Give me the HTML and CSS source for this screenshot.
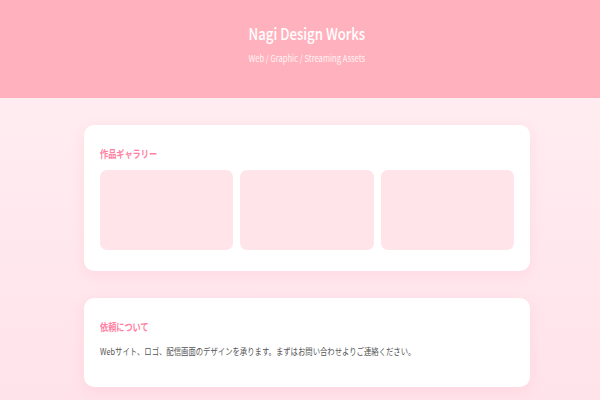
FILE: index.html
```html
<!DOCTYPE html>
<html lang="ja">
<head>
<meta charset="utf-8">
<link rel="stylesheet" href="styles.css">
</head>
<body>
<header class="hero">
  <h1 class="hero-title"><span class="narrow">Nagi Design Works</span></h1>
  <p class="hero-sub"><span class="narrow">Web / Graphic / Streaming Assets</span></p>
</header>
<main class="main">
  <section class="card">
    <h2 class="card-title"><span class="narrow left">作品ギャラリー</span></h2>
    <div class="gallery">
      <div class="tile"></div>
      <div class="tile"></div>
      <div class="tile"></div>
    </div>
  </section>
  <section class="card card-about">
    <h2 class="card-title"><span class="narrow left">依頼について</span></h2>
    <p class="card-text"><span class="narrow left">Webサイト、ロゴ、配信画面のデザインを承ります。まずはお問い合わせよりご連絡ください。</span></p>
  </section>
</main>
</body>
</html>
```
FILE: styles.css
```css
* { box-sizing: border-box; }
html, body { margin: 0; padding: 0; }
body {
  font-family: "Noto Sans CJK JP", "Noto Sans", sans-serif;
  background: linear-gradient(#fff0f3, #ffe3ea);
  min-height: 400px;
  overflow: hidden;
}
.narrow {
  display: inline-block;
  white-space: nowrap;
  transform: scaleX(0.8);
  transform-origin: center;
}
.narrow.left { transform-origin: left center; }
.hero {
  background: #ffb2bd;
  height: 98px;
  padding: 21px 0 0 14px;
  text-align: center;
  color: #fff;
}
.hero-title {
  margin: 0;
  font-size: 16.5px;
  font-weight: 500;
  line-height: 24px;
}
.hero-sub {
  margin: 6px 0 0;
  font-size: 9.5px;
  line-height: 14px;
  color: #fff4f6;
}
.main {
  width: 446px;
  margin: 27px auto 0;
  position: relative;
  left: 7px;
  display: flex;
  flex-direction: column;
  gap: 27px;
}
.card {
  background: #fff;
  border-radius: 10px;
  padding: 22px 16px 21px;
  box-shadow: 0 4px 14px rgba(255, 150, 175, 0.18);
}
.card-title {
  margin: 0 0 9px;
  font-size: 10.2px;
  line-height: 14px;
  font-weight: 700;
  color: #ff7fa2;
}
.gallery {
  display: grid;
  grid-template-columns: repeat(3, 1fr);
  gap: 7px;
}
.tile {
  height: 80px;
  background: #ffe4ea;
  border-radius: 7px;
}
.card-about { padding-bottom: 29px; }
.card-about .card-title { margin-bottom: 10px; }
.card-text {
  margin: 0;
  font-size: 9.2px;
  line-height: 14px;
  color: #555;
}
```
